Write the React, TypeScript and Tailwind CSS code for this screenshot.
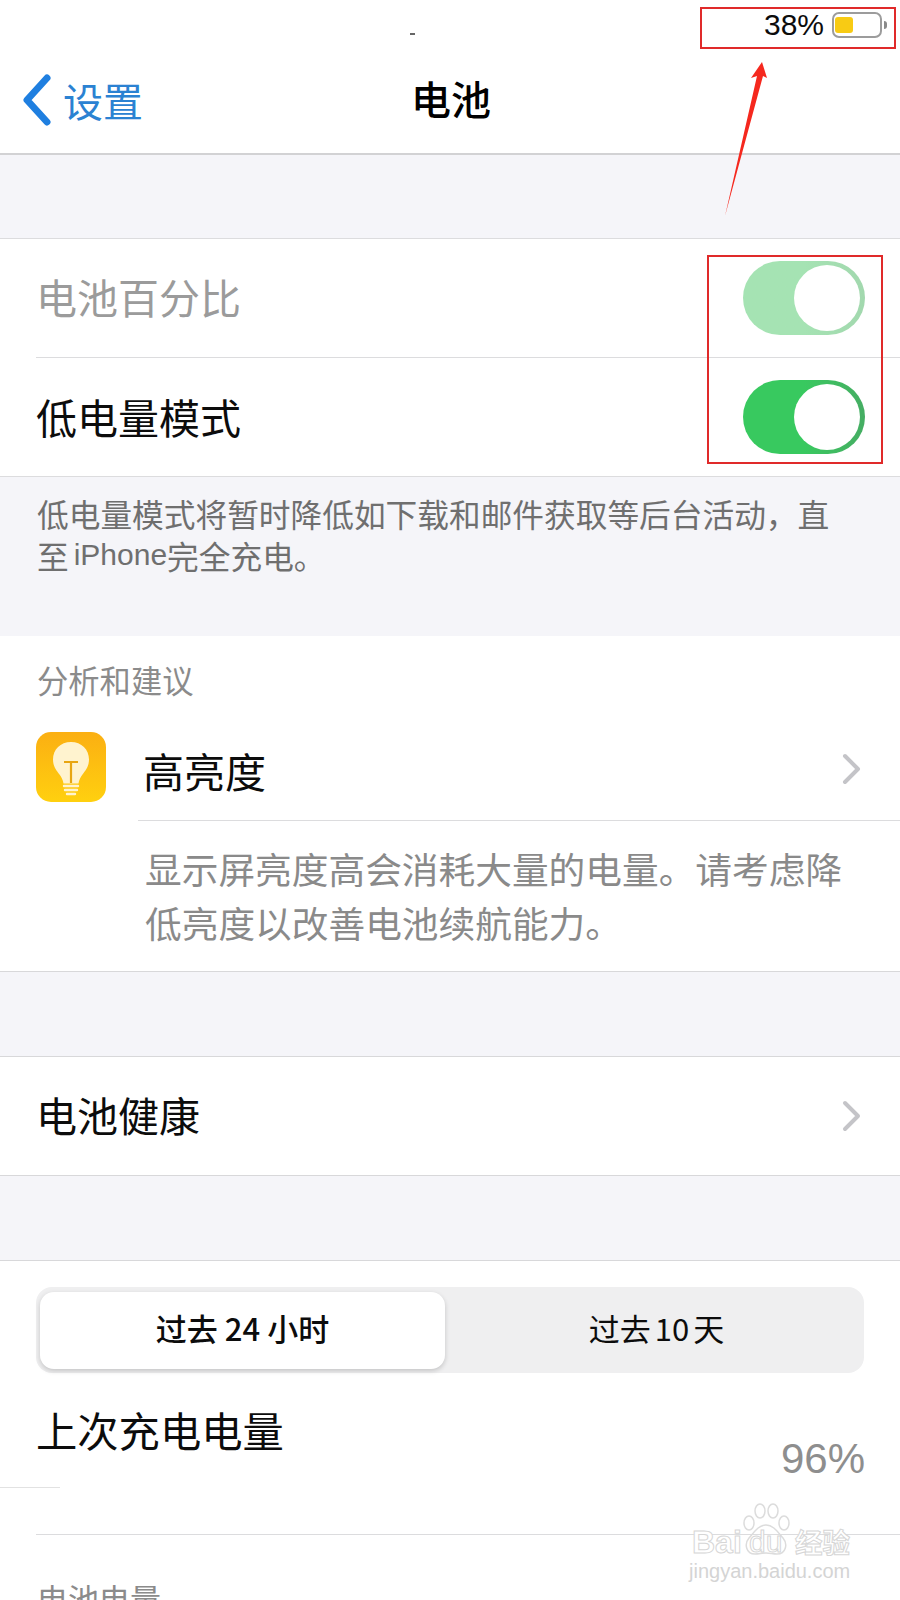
const cjk = 'font-["Noto_Sans_CJK_SC","Liberation_Sans",sans-serif]';

function Toggle({ dim = false }: { dim?: boolean }) {
  return (
    <div
      className={`flex h-[74px] w-[122px] items-center justify-end rounded-full bg-gradient-to-r pr-[5px] ${
        dim ? 'from-[#a5e3b3] via-[#a5e3b3] to-[#a2d8ae]' : 'from-[#38c95f] via-[#38c95f] to-[#45ad63]'
      }`}
    >
      <div className="h-[66px] w-[66px] rounded-full bg-white" />
    </div>
  );
}

function Chevron({ className = '' }: { className?: string }) {
  return (
    <svg viewBox="0 0 20 32" className={`h-[32px] w-[20px] ${className}`} fill="none" aria-hidden="true">
      <path d="m3 3 13 13L3 29" stroke="#c4c4c8" strokeWidth="4" strokeLinecap="round" strokeLinejoin="round" />
    </svg>
  );
}

function BulbIcon() {
  return (
    <div className="flex h-[70px] w-[70px] shrink-0 items-center justify-center rounded-[15px] bg-gradient-to-b from-[#fbaf12] to-[#ffd00f]">
      <svg viewBox="0 0 70 70" className="h-[70px] w-[70px]" fill="none" aria-hidden="true">
        <path
          d="M35 10c-10.500 0-18 7.500-18 17.500 0 7 3.500 11 6.500 15 2 2.800 3.500 5.500 4 9h15c.5-3.500 2-6.200 4-9 3-4 6.500-8 6.500-15C53 17.500 45.500 10 35 10Z"
          fill="#fff3cf"
        />
        <path d="M28 30h14M35 30v21" stroke="#e8a612" strokeWidth="2.200" />
        <path d="M28 54h14M29 58h12M31 62h8" stroke="#fff3cf" strokeWidth="2.400" strokeLinecap="round" />
      </svg>
    </div>
  );
}

function Gap() {
  return <div className="h-[84px] bg-[#f5f5f9]" />;
}

function Overlays() {
  return (
    <>
      {/* red annotations on top of the screenshot */}
      <div className="absolute left-[700px] top-[7px] h-[42px] w-[196px] border-2 border-[#e02a2a]" />
      <div className="absolute left-[707px] top-[255px] h-[209px] w-[176px] border-2 border-[#e02a2a]" />
      <svg viewBox="0 0 900 240" className="absolute left-0 top-0 h-[240px] w-[900px]" aria-hidden="true">
        <path d="M762 62 767 78 763 76 725 216 757 76 751 78Z" fill="#f5281e" />
        <path d="M410 34h5" stroke="#333" strokeWidth="1.500" />
      </svg>
      <div className="absolute left-[689px] top-[1500px] h-[100px] w-[170px] text-[#dcdcdc]">
        <svg viewBox="0 0 52 54" className="absolute left-[51px] top-[3px] h-[54px] w-[52px]" fill="none" stroke="currentColor" strokeWidth="1.500" aria-hidden="true">
          <ellipse cx="9" cy="20" rx="5" ry="7" />
          <ellipse cx="20" cy="8" rx="5" ry="7" />
          <ellipse cx="33" cy="8" rx="5" ry="7" />
          <ellipse cx="44" cy="20" rx="5" ry="7" />
          <path d="M26 22c-7 0-11 6-17 13-5 6-3 16 6 16 4 0 7-1 11-1s7 1 11 1c9 0 11-10 6-16-6-7-10-13-17-13Z" />
        </svg>
        <span className="absolute left-[3px] top-[22px] font-['Liberation_Sans',sans-serif] text-[32px] font-bold leading-[40px] text-white [-webkit-text-stroke:1px_#d6d6d6]">
          Bai
        </span>
        <span className="absolute left-[60px] top-[24px] font-['Liberation_Sans',sans-serif] text-[30px] leading-[36px] text-white [-webkit-text-stroke:1px_#d6d6d6]">
          du
        </span>
        <span className={`absolute left-[106px] top-[23px] ${cjk} text-[27.500px] font-bold leading-[36px] text-white [-webkit-text-stroke:1px_#d6d6d6]`}>
          经验
        </span>
        <span className="absolute left-0 top-[57px] font-['Liberation_Sans',sans-serif] text-[20px] leading-[28px] text-[#d4d4d4]">
          jingyan.baidu.com
        </span>
      </div>
    </>
  );
}

export default function App() {
  return (
    <div className={`relative h-[1600px] w-[900px] overflow-hidden bg-white ${cjk} text-[#0c0c0c]`}>
      <header className="h-[155px] border-b-2 border-[#d2d2d4]">
        <div className="flex h-[49px] items-center justify-end gap-[8px] pr-[18px]">
          <span className="font-['Liberation_Sans',sans-serif] text-[30px] leading-none">38%</span>
          <div className="relative h-[26px] w-[50px] rounded-[7px] border-2 border-[#9c9c9c] px-[1px] py-[3px]">
            <div className="h-full w-[18px] rounded-[3px] bg-[#f8cb14]" />
            <div className="absolute right-[-7px] top-[7px] h-[8px] w-[3px] rounded-r bg-[#8a8a8a]" />
          </div>
        </div>
        <div className="relative flex h-[104px] items-center justify-center">
          <div className="absolute left-[22px] top-[25px] flex items-center gap-[11px]">
            <svg viewBox="0 0 30 52" className="h-[52px] w-[30px]" fill="none" aria-hidden="true">
              <path d="M25 4 5 26l20 22" stroke="#1f7fe0" strokeWidth="7" strokeLinecap="round" strokeLinejoin="round" />
            </svg>
            <span className="text-[40px] leading-[52px] text-[#2b82d2]">设置</span>
          </div>
          <span className="relative left-[1px] top-[-3px] text-[40px] font-medium leading-[52px] text-black">电池</span>
        </div>
      </header>

      <div className="h-[83px] bg-[#f5f5f9]" />

      <section className="border-y border-[#dcdcde]">
        <div className="flex h-[118px] items-center justify-between pr-[35px] pl-[36px]">
          <span className="mb-[3px] text-[41px] leading-none text-[#9b9b9b]">电池百分比</span>
          <Toggle dim />
        </div>
        <div className="ml-[36px] border-t border-[#dcdcde]" />
        <div className="flex h-[118px] items-center justify-between pr-[35px] pl-[36px]">
          <span className="mb-[1px] text-[41px] leading-none">低电量模式</span>
          <Toggle />
        </div>
      </section>

      <div className="h-[159px] bg-[#f5f5f9] pt-[15px] pl-[37px] text-[31.700px] leading-[42px] text-[#6f6f6f]">
        <p>低电量模式将暂时降低如下载和邮件获取等后台活动，直</p>
        <p className="flex">
          <span>至</span>
          <span className="ml-[5px] font-['Liberation_Sans',sans-serif] text-[30px]">iPhone</span>
          <span>完全充电。</span>
        </p>
      </div>

      <section className="border-b border-[#d8d8da]">
        <p className="pt-[20px] pl-[37px] text-[31.300px] leading-[48px] text-[#8b8b8b]">分析和建议</p>
        <div className="flex items-start pl-[36px] pt-[28px]">
          <BulbIcon />
          <div className="ml-[32px] flex-1">
            <div className="flex h-[89px] items-center justify-between border-b border-[#dcdcde] pr-[38px] pl-[5px]">
              <span className="mb-[11px] text-[41px] leading-none">高亮度</span>
              <Chevron className="mb-[14px]" />
            </div>
            <p className="pt-[20px] pb-[22px] pr-[50px] pl-[7px] text-[36.700px] leading-[54px] text-[#8a8a8a]">
              显示屏亮度高会消耗大量的电量。请考虑降低亮度以改善电池续航能力。
            </p>
          </div>
        </div>
      </section>

      <Gap />

      <section className="flex h-[120px] items-center justify-between border-y border-[#d8d8da] pr-[38px] pl-[36px]">
        <span className="mb-[4px] text-[41px] leading-none">电池健康</span>
        <Chevron />
      </section>

      <Gap />

      <section className="border-t border-[#d8d8da] px-[36px] pt-[26px]">
        <div className="flex h-[86px] w-[828px] items-center rounded-[16px] bg-[#efeff0] p-[4px]">
          <div className="flex h-[77px] w-[405px] items-center justify-center rounded-[14px] bg-white pb-[4px] text-[31px] font-medium shadow-[0_2px_5px_rgba(0,0,0,0.18)]">
            过去 24 小时
          </div>
          <div className="flex flex-1 items-center justify-center pb-[4px] pl-[8px] text-[31px]">
            过去<span className="mx-[4px]">10</span>天
          </div>
        </div>
        <div className="relative h-[161px]">
          <p className="pt-[26px] text-[41.300px] leading-[60px]">上次充电电量</p>
          <span className="absolute right-[-1px] top-[62px] font-['Liberation_Sans',sans-serif] text-[42px] leading-[48px] text-[#8e8e8e]">
            96%
          </span>
        </div>
      </section>

      <div className="ml-[36px] border-t border-[#dcdcde]" />
      <p className="pt-[39px] pl-[37px] text-[31px] leading-[48px] text-[#8b8b8b]">电池电量</p>

      {/* stray hairline left in the capture */}
      <div className="absolute left-0 top-[1487px] h-px w-[60px] bg-[#e2e2e2]" />
      <Overlays />
    </div>
  );
}
